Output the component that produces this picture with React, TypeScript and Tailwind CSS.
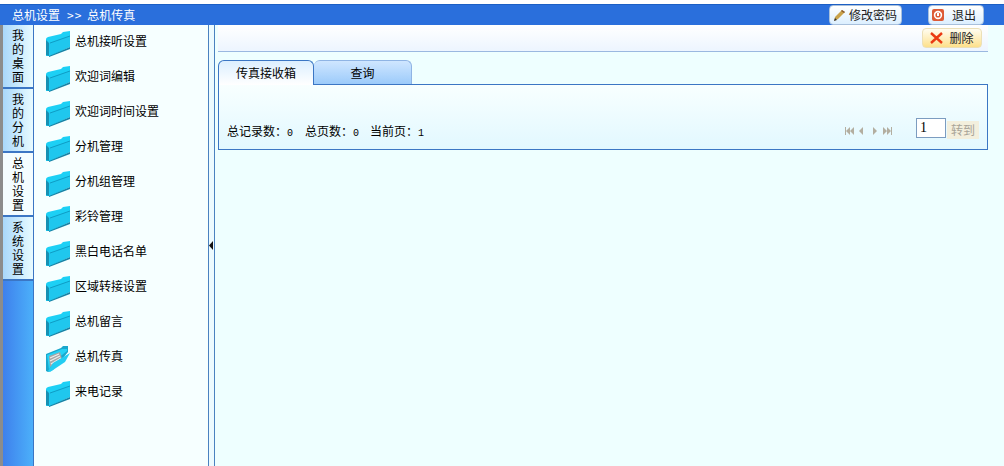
const cjk = "font-['Noto_Sans_CJK_SC','Liberation_Sans',sans-serif]";

const sideTabs = [
  { label: "我的桌面", active: false },
  { label: "我的分机", active: false },
  { label: "总机设置", active: true },
  { label: "系统设置", active: false },
];

const menuItems = [
  "总机接听设置",
  "欢迎词编辑",
  "欢迎词时间设置",
  "分机管理",
  "分机组管理",
  "彩铃管理",
  "黑白电话名单",
  "区域转接设置",
  "总机留言",
  "总机传真",
  "来电记录",
];

const Folder = ({ open }: { open?: boolean }) => (
  <svg width="25" height="26" viewBox="0 0 25 26" className="shrink-0">
    {open ? (
      <>
        <path d="M1 8 L16 2 L18 0 L23 0 L23 6 L8 24 L3 26 L1 25 Z" fill="#1aa7cc" />
        <path d="M2 9 L17 3 L22 3 L22 5 L7 17 L4 24 Z" fill="#25d2f6" />
        <path d="M4 10 L15 6 L17 13 L7 20 L5 21 Z" fill="#a6a6a6" />
        <path d="M5 12 L14 8 M5 15 L15 10 M6 18 L16 12" stroke="#ececec" strokeWidth="1.3" />
        <path d="M8 17 L25 7 L20 16 L5 26 L3 25 Z" fill="#22cdf2" />
      </>
    ) : (
      <>
        <path d="M1 8 Q1 7 3 6 L16 3 L18 1 L25 0 L25 15 L5 25 L1 25 Z" fill="#1cd0f5" />
        <path d="M4 12 L25 5 L25 16 L5 25 Z" fill="#1fc7ee" />
        <path d="M1 9 L4 12 L4 25 L1 24 Z" fill="#1790b3" />
        <path d="M4 25 L25 16 L25 18 L4 26 Z" fill="#1583a6" />
        <path d="M5 12 L25 5" stroke="#0f9cc4" strokeWidth="1" />
      </>
    )}
  </svg>
);

const Pencil = () => (
  <svg width="11" height="12" viewBox="0 0 11 12" className="shrink-0">
    <path d="M0 12 L1 8 L8 1 L11 3 L4 10 Z" fill="#c9a24a" />
    <path d="M7 2 L8 1 L11 3 L10 4 Z" fill="#8a5a30" />
    <path d="M0 12 L1 9 L3 11 Z" fill="#333" />
  </svg>
);

const ExitIcon = () => (
  <svg width="12" height="12" viewBox="0 0 12 12" className="shrink-0">
    <rect width="12" height="12" rx="2" fill="#dd5a36" />
    <circle cx="6" cy="6" r="3.4" fill="none" stroke="#fff" strokeWidth="1.6" />
    <rect x="5" y="4" width="2" height="3" fill="#fff" />
  </svg>
);

const CrossIcon = () => (
  <svg width="13" height="12" viewBox="0 0 13 12" className="shrink-0">
    <path d="M1 1 L12 11 M12 1 L1 11" stroke="#ea3a12" strokeWidth="2.4" />
  </svg>
);

const PagerIcon = ({ d, w, className }: { d: string; w: number; className?: string }) => (
  <svg width={w} height="8" viewBox={`0 0 ${w} 8`} className={`shrink-0 ${className ?? ""}`}>
    <path d={d} fill="#b3aea0" />
  </svg>
);

const Digit = ({ value }: { value: number }) => (
  <span className="font-['Liberation_Mono',monospace] text-[10px]">{value}</span>
);

export default function App() {
  return (
    <div className={`${cjk} flex h-[466px] w-[1004px] flex-col overflow-hidden bg-white text-xs text-black`}>
      {/* top bar */}
      <div className="mt-1 flex h-[21px] shrink-0 items-center border-t border-[#1c5fc4] bg-[#2a6fdc] pl-3 pr-5 text-white">
        <span className="leading-none">总机设置</span>
        <span className="ml-[7px] leading-none tracking-[1px]">&gt;&gt;</span>
        <span className="ml-[5px] leading-none">总机传真</span>
        <div className="ml-auto flex h-5 items-start gap-[26px]">
          <button className="flex h-[20px] w-[73px] items-center justify-center gap-1 rounded-sm border border-[#a8c0dc] bg-gradient-to-b from-white to-[#dcefff] text-[#222]">
            <Pencil />
            修改密码
          </button>
          <button className="flex h-[20px] w-[56px] items-center gap-2 rounded-sm border border-[#a8c0dc] bg-gradient-to-b from-white to-[#dcefff] pl-[3px] text-[#222]">
            <ExitIcon />
            退出
          </button>
        </div>
      </div>

      <div className="flex min-h-0 flex-1">
        {/* vertical tabs */}
        <div className="flex w-[34px] shrink-0 flex-col border-l-[3px] border-r border-l-[#8c8c8c] border-r-[#3b76c4] bg-gradient-to-r from-[#3f80ec] to-[#4cb0fa]">
          {sideTabs.map((tab) => (
            <div
              key={tab.label}
              className={`flex h-16 w-[30px] flex-col items-center justify-center border-b-2 border-b-[#3b76c4] text-[12px] ${
                tab.active ? "bg-[#f4fdff]" : "bg-gradient-to-r from-[#a9d8fb] to-[#e8fbff]"
              }`}
            >
              {tab.label.split("").map((ch) => (
                <span key={ch} className="h-[14px] leading-[14px]">{ch}</span>
              ))}
            </div>
          ))}
        </div>

        {/* menu */}
        <div className="flex w-[175px] shrink-0 flex-col border-r border-r-[#4a82c0] bg-[#f6ffff] pl-[11px] pt-[6px]">
          {menuItems.map((item) => (
            <div key={item} className="flex h-[35px] shrink-0 items-start gap-[5px]">
              <Folder open={item === "总机传真"} />
              <span className="mt-px leading-[18px]">{item}</span>
            </div>
          ))}
        </div>

        {/* splitter */}
        <div className="flex w-[6px] shrink-0 items-center border-r border-r-[#4a82c0] bg-[#ecfbff]">
          <svg width="5" height="9" viewBox="0 0 5 9">
            <path d="M4 0 L0 4.5 L4 9 Z" fill="#111" />
          </svg>
        </div>

        {/* main */}
        <div className="min-w-0 flex-1 bg-[#eeffff] pl-[3px] pr-4">
          <div className="flex h-[27px] items-start justify-end border-b border-b-[#9ab8e0] bg-gradient-to-b from-white to-[#edf5ff] pr-[6px] pt-[3px]">
            <button className="flex h-[20px] w-[60px] items-center justify-center gap-[6px] rounded-sm border border-[#ece0b8] bg-gradient-to-b from-[#fffdf0] to-[#fde08a] text-[#222]">
              <CrossIcon />
              删除
            </button>
          </div>

          <div className="mt-2 flex h-6 items-stretch">
            <div className="z-10 -mb-px flex w-[96px] items-center justify-center rounded-t-md border-x border-t border-x-[#3b76c4] border-t-[#3b76c4] bg-gradient-to-b from-[#dcefff] to-white">
              传真接收箱
            </div>
            <div className="flex w-[98px] items-center justify-center rounded-t-md border-r border-t border-r-[#8fb4e4] border-t-[#8fb4e4] bg-gradient-to-b from-[#cfe6ff] to-[#9ccbfa]">
              查询
            </div>
          </div>

          <div className="flex h-[66px] items-start border border-[#3b76c4] bg-gradient-to-b from-[#f8ffff] to-[#e2f8ff] pl-2 pr-[8px] pt-[33px]">
            <span className="mt-[3px] leading-5">总记录数：<Digit value={0} /></span>
            <span className="ml-3 mt-[3px] leading-5">总页数：<Digit value={0} /></span>
            <span className="ml-[11px] mt-[3px] leading-5">当前页：<Digit value={1} /></span>
            <div className="ml-auto flex items-start">
              <div className="mr-6 mt-[9px] flex items-center">
                <PagerIcon w={9} d="M0 0 H1 V8 H0 Z M5 0 V8 L1 4 Z M9 0 V8 L5 4 Z" />
                <PagerIcon w={4} className="ml-[5px]" d="M4 0 V8 L0 4 Z" />
                <PagerIcon w={4} className="ml-[10px]" d="M0 0 V8 L4 4 Z" />
                <PagerIcon w={9} className="ml-[6px]" d="M0 0 V8 L4 4 Z M4 0 V8 L8 4 Z M8 0 H9 V8 H8 Z" />
              </div>
              <input
                readOnly
                value="1"
                className="h-5 w-[30px] border border-[#7c9cc0] bg-white px-[3px] font-['Liberation_Serif',serif] text-sm text-black outline-none"
              />
              <span className="ml-px mt-[3px] flex h-[18px] w-[32px] items-center justify-center bg-[#f3efdd] text-[#a8a498]">转到</span>
            </div>
          </div>
        </div>
      </div>
    </div>
  );
}
